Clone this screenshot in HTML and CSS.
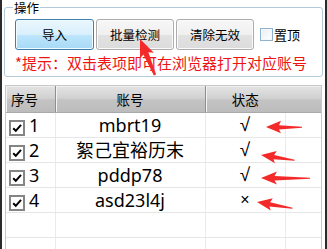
FILE: index.html
```html
<!DOCTYPE html>
<html lang="zh-CN">
<head>
<meta charset="utf-8">
<link rel="stylesheet" href="styles.css">
</head>
<body>
<div class="window">
  <fieldset class="ops">
    <legend>操作</legend>
    <div class="btns">
      <button class="btn primary">导入</button>
      <button class="btn">批量检测</button>
      <button class="btn">清除无效</button>
      <label class="pin"><span class="cb"></span>置顶</label>
    </div>
    <p class="hint">*提示：双击表项即可在浏览器打开对应账号</p>
  </fieldset>
  <div class="list">
    <table>
      <colgroup><col class="c1"><col class="c2"><col class="c3"><col class="c4"></colgroup>
      <thead>
        <tr><th class="h1">序号</th><th class="h2">账号</th><th class="h3">状态</th><th class="h4"></th></tr>
      </thead>
      <tbody>
        <tr><td class="idx"><span class="rc"><svg viewBox="0 0 12 12" width="12" height="12"><path d="M2.2 6.2 L4.8 8.8 L10 2.8" fill="none" stroke="#000" stroke-width="2"/></svg></span>1</td><td class="acc">mbrt19</td><td class="st">√</td><td></td></tr>
        <tr><td class="idx"><span class="rc"><svg viewBox="0 0 12 12" width="12" height="12"><path d="M2.2 6.2 L4.8 8.8 L10 2.8" fill="none" stroke="#000" stroke-width="2"/></svg></span>2</td><td class="acc">絮己宜裕历末</td><td class="st">√</td><td></td></tr>
        <tr><td class="idx"><span class="rc"><svg viewBox="0 0 12 12" width="12" height="12"><path d="M2.2 6.2 L4.8 8.8 L10 2.8" fill="none" stroke="#000" stroke-width="2"/></svg></span>3</td><td class="acc">pddp78</td><td class="st">√</td><td></td></tr>
        <tr><td class="idx"><span class="rc"><svg viewBox="0 0 12 12" width="12" height="12"><path d="M2.2 6.2 L4.8 8.8 L10 2.8" fill="none" stroke="#000" stroke-width="2"/></svg></span>4</td><td class="acc">asd23l4j</td><td class="st x">×</td><td></td></tr>
        <tr><td></td><td></td><td></td><td></td></tr>
        <tr><td></td><td></td><td></td><td></td></tr>
      </tbody>
    </table>
  </div>
</div>
<svg class="marks" width="327" height="249" viewBox="0 0 327 249">
  <g fill="#f42a2a">
    <polygon transform="translate(140,39) rotate(67.4)" points="0,0 18,-7.5 15.5,-2.6 39,-1.2 39,1.2 15.5,2.8 18,7.5"/>
    <polygon transform="translate(266,127) rotate(0)" points="0,0 15,-6.2 13,-1.8 36,-0.3 36,0.8 13,2.4 15,6.2"/>
    <polygon transform="translate(261,155) rotate(8.4)" points="0,0 15,-6.2 13,-1.8 34,-0.3 34,0.8 13,2.4 15,6.2"/>
    <polygon transform="translate(261,178) rotate(0)" points="0,0 16,-6.4 13.5,-1.9 49,-0.3 49,0.8 13.5,2.4 16,6.4"/>
    <polygon transform="translate(257,202) rotate(9.5)" points="0,0 15,-6.2 13,-1.8 36,-0.3 36,0.8 13,2.4 15,6.2"/>
  </g>
</svg>
</body>
</html>
```

FILE: styles.css
```css
html, body {
  margin: 0;
  padding: 0;
  background: #fff;
}
body {
  position: relative;
  width: 327px;
  height: 249px;
  overflow: hidden;
  font-family: "Noto Sans", "Noto Sans CJK SC", sans-serif;
  color: #000;
}
.window {
  box-sizing: border-box;
  height: 249px;
  border-left: 2px solid #2b2b2b;
  border-right: 2px solid #2b2b2b;
  background: #fff;
}
.ops {
  margin: 0 2px;
  padding: 4px 0 4px 10px;
  border: 1px solid #b3cadb;
  border-radius: 3px;
  min-width: 0;
}
.ops legend {
  font-family: "Noto Sans CJK SC", sans-serif;
  font-size: 12.5px;
  line-height: 15px;
  padding: 0 1px;
  margin-left: -2px;
  color: #000;
}
.btns {
  display: flex;
  align-items: center;
  gap: 2px;
}
.btn {
  box-sizing: border-box;
  width: 78px;
  height: 31px;
  padding: 0;
  margin: 0;
  border: 1px solid #acacac;
  border-radius: 3px;
  background: linear-gradient(#f7f7f7, #f0f0f0 50%, #e2e2e2 51%, #dcdcdc);
  box-shadow: inset 0 0 0 1px #fbfbfb;
  font-family: "Noto Sans CJK SC", sans-serif;
  font-size: 12.5px;
  line-height: 14px;
  color: #000;
}
.btn.primary {
  width: 79px;
  border-color: #3c7fb1;
  background: linear-gradient(#eaf6fd, #d9f0fc 50%, #bee6fd 51%, #a7d9f5);
  box-shadow: inset 0 0 0 1px #f2fbff;
}
.pin {
  display: flex;
  align-items: center;
  margin-left: 4px;
  font-family: "Noto Sans CJK SC", sans-serif;
  font-size: 13px;
  line-height: 14px;
}
.cb {
  box-sizing: border-box;
  width: 13px;
  height: 13px;
  border: 1px solid #8fb2cf;
  background: linear-gradient(135deg, #e8eef3, #ffffff);
  box-shadow: inset 0 0 0 1px #f4f8fb;
  margin-right: 1px;
}
.hint {
  margin: 4px 0 0;
  font-family: "Noto Sans CJK SC", sans-serif;
  font-size: 15px;
  line-height: 18px;
  color: #ee1414;
  white-space: nowrap;
}
.list {
  margin: 8px 3px 0 3px;
  border: 1px solid #c8c8c8;
  border-bottom: none;
  height: 170px;
  overflow: hidden;
}
.list table {
  width: 316px;
  table-layout: fixed;
  border-collapse: collapse;
}
.c1 { width: 49px; }
.c2 { width: 150px; }
.c3 { width: 80px; }
.c4 { width: 37px; }
th {
  height: 26px;
  padding: 0;
  font-family: "Noto Sans CJK SC", sans-serif;
  font-size: 13.5px;
  font-weight: normal;
  line-height: 16px;
  background: linear-gradient(#e3e3e3, #d2d2d2 45%, #c3c3c3 55%, #bcbcbc);
  border-bottom: 1px solid #a9a9a9;
}
th.h1 {
  text-align: left;
  padding-left: 5px;
  border-right: 1px solid #8f8f8f;
  box-shadow: inset 1px 0 0 #f3f3f3, inset 0 1px 0 #efefef;
}
th.h2 {
  text-align: center;
  border-right: 1px solid #8f8f8f;
  box-shadow: inset 1px 0 0 #f3f3f3, inset 0 1px 0 #efefef;
}
th.h3 {
  text-align: center;
  box-shadow: inset 1px 0 0 #f3f3f3, inset 0 1px 0 #efefef;
}
th.h4 {
  box-shadow: inset 0 1px 0 #efefef;
}
td {
  height: 24px;
  padding: 0;
  border-right: 1px solid #ebebeb;
  border-bottom: 1px solid #e6e6e6;
  font-size: 18px;
  line-height: 22px;
  white-space: nowrap;
}
td:last-child {
  border-right: none;
}
td.idx {
  padding-left: 3px;
}
.rc {
  display: inline-flex;
  align-items: center;
  justify-content: center;
  box-sizing: border-box;
  width: 16px;
  height: 16px;
  border: 2px solid #858585;
  background: #fff;
  vertical-align: -2px;
  margin-right: 4px;
}
.rc svg {
  display: block;
}
td.acc {
  text-align: center;
}
td.st {
  text-align: center;
  font-family: "Liberation Sans", sans-serif;
  font-size: 19px;
}
td.st.x {
  font-family: "Liberation Sans", sans-serif;
  font-size: 16px;
}
.marks {
  position: absolute;
  left: 0;
  top: 0;
  pointer-events: none;
}
```
